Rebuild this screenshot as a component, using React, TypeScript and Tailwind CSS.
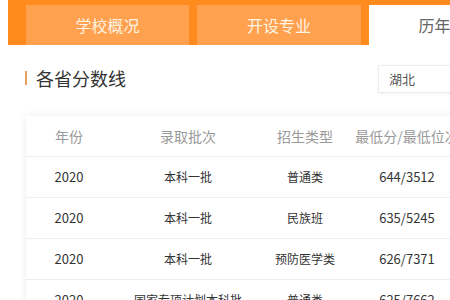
import * as React from 'react';
import { ChevronDown } from 'lucide-react';

const rows = [
    { year: '2020', batch: '本科一批', type: '普通类', score: '644/3512' },
    { year: '2020', batch: '本科一批', type: '民族班', score: '635/5245' },
    { year: '2020', batch: '本科一批', type: '预防医学类', score: '626/7371' },
    { year: '2020', batch: '国家专项计划本科批', type: '普通类', score: '625/7662' },
];

const cols = 'grid grid-cols-[86px_152px_82px_122px] items-center text-center';

export default function App() {
    return (
        <div className="w-[450px] h-[300px] overflow-hidden bg-white font-['Noto_Sans_CJK_SC',sans-serif]">
            <div className="ml-[8px] h-[45px] bg-[#ff8a1e] flex items-end gap-[8px] pl-[18px] w-[600px]">
                <div className="w-[163px] h-[40px] bg-[#ffa14f] flex items-center justify-center text-[16px] text-[#fff3e3]">
                    学校概况
                </div>
                <div className="w-[164px] h-[40px] bg-[#ffa14f] flex items-center justify-center text-[16px] text-[#fff3e3]">
                    开设专业
                </div>
                <div className="w-[163px] h-[40px] bg-white flex items-center justify-center text-[16px] text-[#666]">
                    历年分数
                </div>
            </div>

            <div className="mt-[20px] h-[28px] flex items-center pl-[25px]">
                <div className="w-[2px] h-[14px] bg-[#e9a060] mb-[3px]" />
                <span className="ml-[9px] text-[18px] text-[#333] leading-none mb-[3px]">各省分数线</span>
                <div className="ml-auto w-[90px] mr-[-18px] h-[28px] border border-[#ececec] shadow-[0_1px_3px_rgba(0,0,0,0.05)] flex items-center pl-[10px] text-[13px] text-[#555]">
                    湖北
                    <ChevronDown className="ml-[34px] w-[10px] h-[10px] text-[#ccc]" />
                </div>
            </div>

            <div className="ml-[26px] mt-[23px] w-[460px] bg-white shadow-[0_0_8px_rgba(0,0,0,0.08)]">
                <div className={`${cols} h-[41px] border-b border-[#eeeeee] text-[14px] text-[#999] whitespace-nowrap`}>
                    <div>年份</div>
                    <div>录取批次</div>
                    <div>招生类型</div>
                    <div>最低分/最低位次</div>
                </div>
                {rows.map((r, i) => (
                    <div key={i} className={`${cols} h-[41px] border-b border-[#eeeeee] text-[#333] whitespace-nowrap`}>
                        <div className="text-[13px]">{r.year}</div>
                        <div className="text-[12px]">{r.batch}</div>
                        <div className="text-[12px]">{r.type}</div>
                        <div className="text-[13px]">{r.score}</div>
                    </div>
                ))}
            </div>
        </div>
    );
}
